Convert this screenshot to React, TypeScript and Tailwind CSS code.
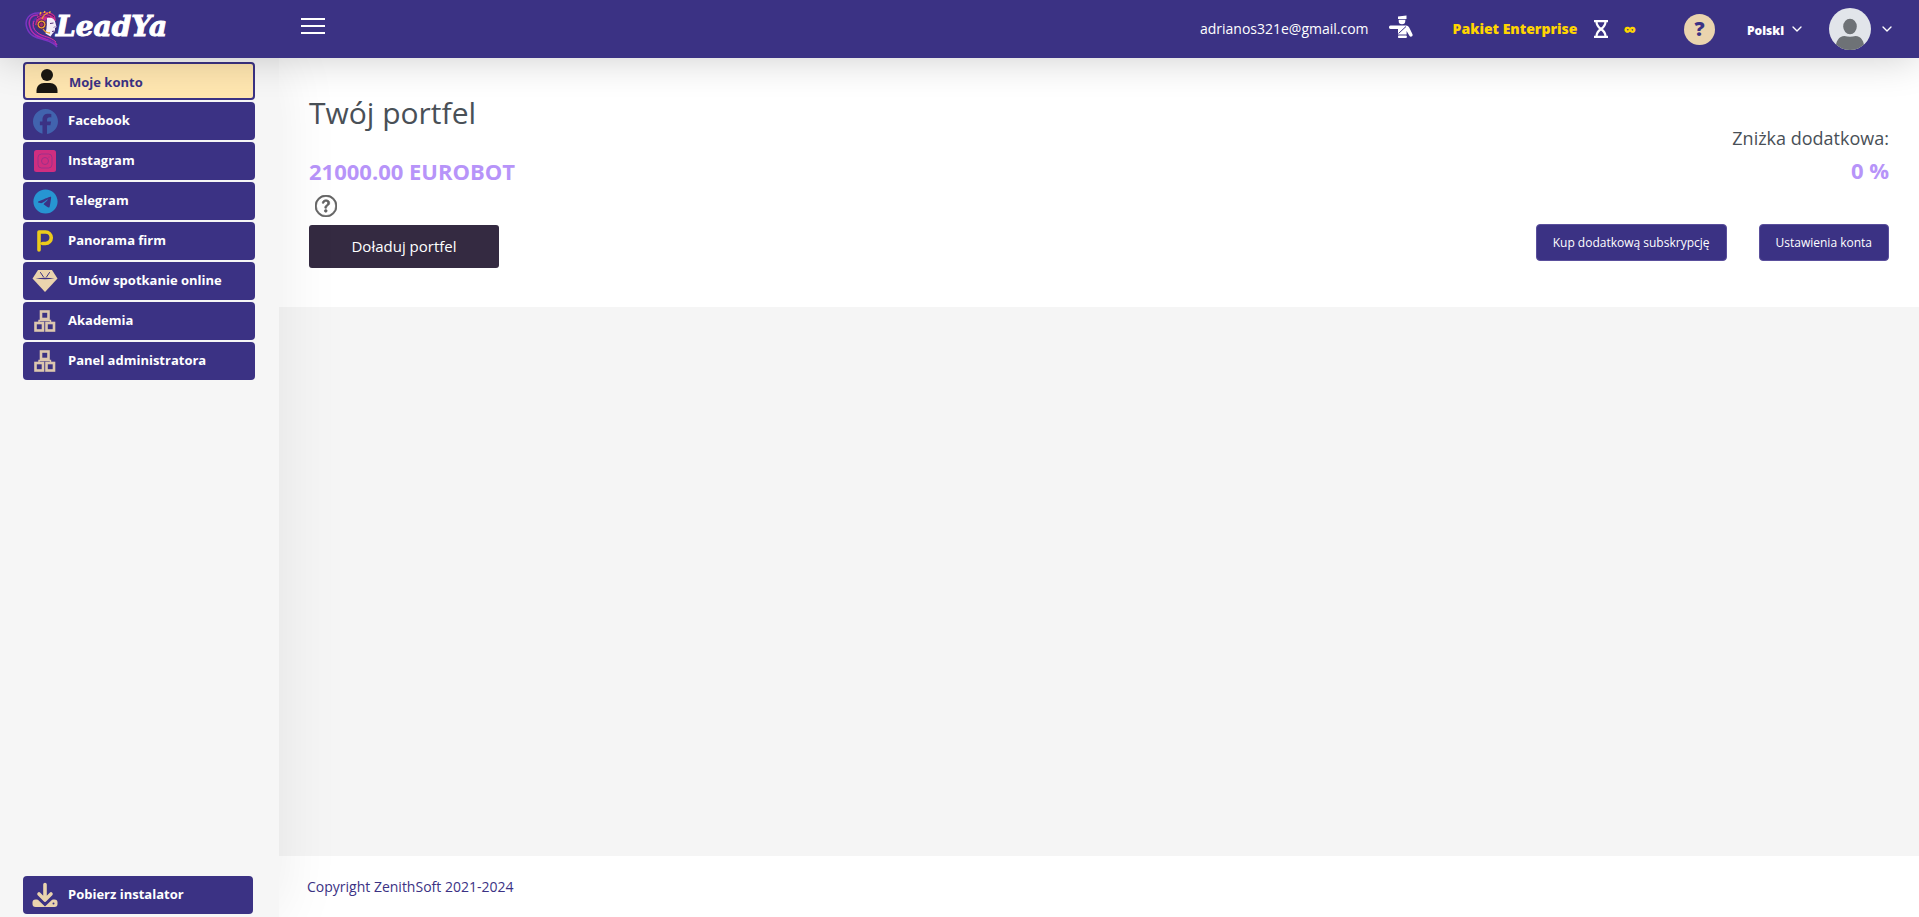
import { FaFacebook, FaTelegram } from 'react-icons/fa6';
import { BsQuestionCircle } from 'react-icons/bs';
import { LuChevronDown } from 'react-icons/lu';

const PersonIcon = () => (
  <svg viewBox="0 0 24 26" className="w-6 h-[26px]" fill="#1a1712">
    <circle cx="12" cy="7" r="6" />
    <path d="M1.500 25v-2.500C1.500 18 5 15 9 15h6c4 0 7.500 3 7.500 7.500V25z" />
  </svg>
);

const InstagramIcon = () => (
  <svg viewBox="0 0 24 24" className="w-6 h-6" fill="none">
    <rect x="1" y="1" width="22" height="22" rx="2.500" fill="#d02e80" />
    <rect x="5" y="5" width="14" height="14" rx="3.500" stroke="#9c3088" strokeWidth="1" />
    <circle cx="12" cy="12" r="3.500" stroke="#9c3088" strokeWidth="1" />
    <circle cx="16" cy="8" r="0.600" fill="#9c3088" />
  </svg>
);

const PanoramaIcon = () => (
  <svg viewBox="0 0 24 24" className="w-6 h-6" fill="none">
    <path
      d="M6 21V3h6.500a5.300 5.300 0 0 1 0 11.500H9.500"
      stroke="#eccb1c"
      strokeWidth="3.600"
      strokeLinecap="round"
      strokeLinejoin="round"
    />
  </svg>
);

const DiamondIcon = () => (
  <svg viewBox="0 0 26 24" className="w-[26px] h-6">
    <path d="M6 1h14l5.500 8.500L13 23 .5 9.500z" fill="#ead4ae" />
    <path d="M3.500 9.500Q13 8 22.500 9.500Q13 11 3.500 9.500z" fill="#3b3284" />
    <path
      d="M8.500 3.500l3 4.500M17.500 3.500l-3 4.500"
      fill="none"
      stroke="#3b3284"
      strokeWidth="1"
      strokeLinecap="round"
    />
  </svg>
);

const BoxesIcon = () => (
  <svg viewBox="0 0 24 24" className="w-6 h-6" fill="none" stroke="#dcc7ae">
    <rect x="8" y="2.500" width="7.500" height="7.500" strokeWidth="2.600" />
    <rect x="2.500" y="14" width="7.500" height="7.500" strokeWidth="2.600" />
    <rect x="13.500" y="14" width="7.500" height="7.500" strokeWidth="2.600" />
    <path d="M6 13v-1.500h11.500V13" strokeWidth="1.400" />
  </svg>
);

const DownloadIcon = () => (
  <svg viewBox="0 0 26 26" className="w-[26px] h-[26px]">
    <rect x="0.500" y="17.500" width="25" height="7.500" rx="3" fill="#ead4ae" />
    <path d="M5 14.500l8 7.500 8-7.500" fill="none" stroke="#3b3284" strokeWidth="3.500" />
    <path
      d="M13 2.500v15M7 12l6 6 6-6"
      fill="none"
      stroke="#ead4ae"
      strokeWidth="3.600"
      strokeLinecap="round"
      strokeLinejoin="round"
    />
    <circle cx="21.500" cy="21.500" r="1" fill="#3b3284" />
  </svg>
);

const OfficerIcon = () => (
  <svg viewBox="0 0 24 24" className="w-6 h-6" fill="white">
    <path d="M9 1.500l8.500-.9v2.600l-1 1H10l-1-1z" />
    <path d="M9.700 5h6.600v1a3.300 3.300 0 0 1-6.600 0z" />
    <path d="M1.500 10.500H17c1.500 0 2.500.7 3.200 2l3.300 6.700c.4 1-.1 2-.9 2.300-.9.400-1.700 0-2.200-.8L17.600 16v3.500H9V14H1.500C.6 14 0 13.200 0 12.300s.6-1.800 1.500-1.800z" />
    <path d="M9.500 18.500l7.500-7" stroke="#3b3284" strokeWidth="1" />
    <rect x="9" y="20.500" width="8.800" height="2.600" rx="0.800" />
  </svg>
);

const HourglassIcon = () => (
  <svg viewBox="0 0 16 20" className="w-4 h-5" fill="none" stroke="white" strokeWidth="2.200">
    <path d="M1 2.200h14M1 17.800h14" />
    <path d="M3.500 2.500c0 4 1.500 5.500 4.500 7.500-3 2-4.500 3.500-4.500 7.500M12.500 2.500c0 4-1.500 5.500-4.500 7.500 3 2 4.500 3.500 4.500 7.500" />
  </svg>
);

const LogoMark = () => (
  <svg viewBox="0 0 36 40" className="w-9 h-10" fill="none">
    <path d="M16 4C5 3 0 11 3 19c3 9 11 10 18 12 7 2 10 4 12 7" stroke="#7b35c4" strokeWidth="1.500" />
    <path d="M14 6C6 6 4 12 6 18c2 8 9 10 16 12 6 1 9 3 11 6" stroke="#b02bb0" strokeWidth="1.500" />
    <path d="M12 9c-4 4-4 9-1 13 4 6 12 5 20 11" stroke="#5b2ba8" strokeWidth="1.800" />
    <path d="M10 12c-2 5 0 9 4 12 5 4 12 3 18 9" stroke="#d9389c" strokeWidth="1" />
    <path d="M13 8c3-6 14-7 18-1l1 5-9-2-7 7-5-1z" fill="#c42c8c" />
    <path d="M14 7c4-3 11-4 16 1M13 10c4-4 9-4 13-2" stroke="#4b1d77" strokeWidth="1" />
    <path d="M16 5.500l1-2.500M20 4l1-2M25 4l1.500-1.500" stroke="#f6b52c" strokeWidth="1.400" />
    <path d="M23 9c5-1 8 1 8.500 5l1 4-1.500 1v3l-2.500 2.500-2 3-5-3 1-5z" fill="#f3edf7" />
    <path d="M26 14.500l3.500-.5M28 22.500l2.500-.5M31 17.500l-1 1" stroke="#51307a" />
    <circle cx="17.500" cy="15.500" r="4.500" fill="#e99a35" stroke="#5a2350" />
    <circle cx="17.500" cy="15.500" r="2.200" fill="#a32d6b" stroke="#4a2050" />
    <path d="M18 10c1-3 3-5 6-6M19 20c2 3 4 4 7 4" stroke="#f0a030" strokeWidth="1.300" />
  </svg>
);

const AvatarIcon = () => (
  <svg viewBox="0 0 42 42" className="w-[42px] h-[42px] rounded-full bg-[#e2e5ea]" fill="#6e7276">
    <ellipse cx="21" cy="18.500" rx="6.800" ry="7.800" />
    <path d="M6.500 42c0-9 3.500-14 9-14 3.500 1 7.500 1 11 0 5.500 0 9 5 9 14z" />
  </svg>
);

const menu = [
  { name: 'Facebook', icon: <FaFacebook className="w-[25px] h-[25px] text-[#4163ae]" /> },
  { name: 'Instagram', icon: <InstagramIcon /> },
  { name: 'Telegram', icon: <FaTelegram className="w-[25px] h-[25px] text-[#2795d2]" /> },
  { name: 'Panorama firm', icon: <PanoramaIcon /> },
  { name: 'Umów spotkanie online', icon: <DiamondIcon /> },
  { name: 'Akademia', icon: <BoxesIcon /> },
  { name: 'Panel administratora', icon: <BoxesIcon /> },
];

const Header = () => (
  <header className="relative z-20 flex items-center h-[58px] px-6 bg-[#3b3284] text-white shadow-[0_0_40px_rgba(0,0,0,0.2)]">
    <a href="#" className="flex items-center w-[277px]">
      <LogoMark />
      <span className="-ml-1 pb-1 font-['DejaVu_Serif',serif] font-bold italic text-[28px] leading-8 [-webkit-text-stroke:1px_white]">
        LeadYa
      </span>
    </a>
    <button type="button" aria-label="Menu" className="flex flex-col gap-[5px] w-6 mb-1.5">
      <span className="w-full h-0.5 bg-white"></span>
      <span className="w-full h-0.5 bg-white"></span>
      <span className="w-full h-0.5 bg-white"></span>
    </button>
    <div className="flex items-center ml-auto">
      <span className="text-sm">adrianos321e@gmail.com</span>
      <button type="button" aria-label="Konto" className="ml-5 mb-1">
        <OfficerIcon />
      </button>
      <span className="ml-10 mr-4 text-sm font-extrabold text-[#ffd500]">Pakiet Enterprise</span>
      <HourglassIcon />
      <span className="ml-3.5 text-lg leading-5 font-extrabold text-[#ffd500]">∞</span>
      <button
        type="button"
        className="ml-12 w-[31px] h-[31px] rounded-full bg-[#ead4ae] text-[#3b3284] text-xl leading-none font-extrabold"
      >
        ?
      </button>
      <div className="relative ml-8">
        <select aria-label="Język" className="appearance-none pr-5 text-xs font-extrabold bg-transparent">
          <option>Polski</option>
        </select>
        <LuChevronDown className="absolute right-0 top-1 w-4 h-4 pointer-events-none" />
      </div>
      <button type="button" aria-label="Profil" className="flex items-center gap-2 ml-6">
        <AvatarIcon />
        <LuChevronDown className="w-4 h-4" />
      </button>
    </div>
  </header>
);

const Sidebar = () => (
  <aside className="relative z-10 flex flex-col w-[279px] shrink-0 pl-[23px] pr-6 pt-1 pb-[3px] bg-[#f6f6f6] shadow-[0_0_60px_rgba(0,0,0,0.08)]">
    <nav className="flex flex-col gap-0.5">
      <a
        href="#"
        className="flex items-center h-[38px] pl-2.5 gap-2.5 rounded border-2 border-[#3b3284] bg-[#ffe6b0] text-[#3b3284] text-[13px] font-bold"
      >
        <PersonIcon />
        <span className="pt-1">Moje konto</span>
      </a>
      {menu.map(item => (
        <a
          href="#"
          key={item.name}
          className="flex items-center h-[38px] pl-2 gap-[9px] rounded bg-[#3b3284] text-white text-[13px] font-bold"
        >
          <span className="flex justify-center w-7">{item.icon}</span>
          {item.name}
        </a>
      ))}
    </nav>
    <a
      href="#"
      className="flex items-center h-[38px] mt-auto mr-0.5 pl-2 gap-[9px] rounded bg-[#3b3284] text-white text-[13px] font-bold"
    >
      <span className="flex justify-center w-7">
        <DownloadIcon />
      </span>
      Pobierz instalator
    </a>
  </aside>
);

const Wallet = () => (
  <section className="flex justify-between items-end h-[249px] px-[30px] bg-white">
    <div className="flex flex-col items-start pb-[39px]">
      <h1 className="text-3xl leading-10 text-[#495057]">Twój portfel</h1>
      <p className="mt-[22px] text-[22px] leading-8 font-bold text-[#b794f9]">21000.00 EUROBOT</p>
      <BsQuestionCircle
        className="ml-1.5 mt-2 w-[22px] h-[22px] text-[#636363]"
        stroke="currentColor"
        strokeWidth="0.500"
      />
      <button
        type="button"
        className="mt-2 w-[190px] h-[43px] rounded-[3px] bg-[#342a41] text-white text-[15px]"
      >
        Doładuj portfel
      </button>
    </div>
    <div className="flex flex-col items-end pb-[46px]">
      <p className="text-lg leading-7 text-[#495057]">Zniżka dodatkowa:</p>
      <p className="mt-0.5 text-[22px] leading-8 font-bold text-[#b794f9]">0 %</p>
      <div className="flex gap-8 mt-[38px]">
        <button
          type="button"
          className="h-[37px] px-4 rounded border border-[#5a4f9c] bg-[#3b3284] text-white text-xs"
        >
          Kup dodatkową subskrypcję
        </button>
        <button
          type="button"
          className="h-[37px] px-4 rounded border border-[#5a4f9c] bg-[#3b3284] text-white text-xs"
        >
          Ustawienia konta
        </button>
      </div>
    </div>
  </section>
);

const App = () => {
  return (
    <div className="flex flex-col min-h-screen overflow-hidden font-['Segoe_UI','Open_Sans',sans-serif]">
      <Header />
      <div className="flex flex-1">
        <Sidebar />
        <main className="flex flex-col flex-1 bg-[#f5f5f5]">
          <Wallet />
          <footer className="flex items-center h-[61px] mt-auto pl-7 bg-white text-sm text-[#3b3284]">
            Copyright ZenithSoft 2021-2024
          </footer>
        </main>
      </div>
    </div>
  );
};

export default App;
